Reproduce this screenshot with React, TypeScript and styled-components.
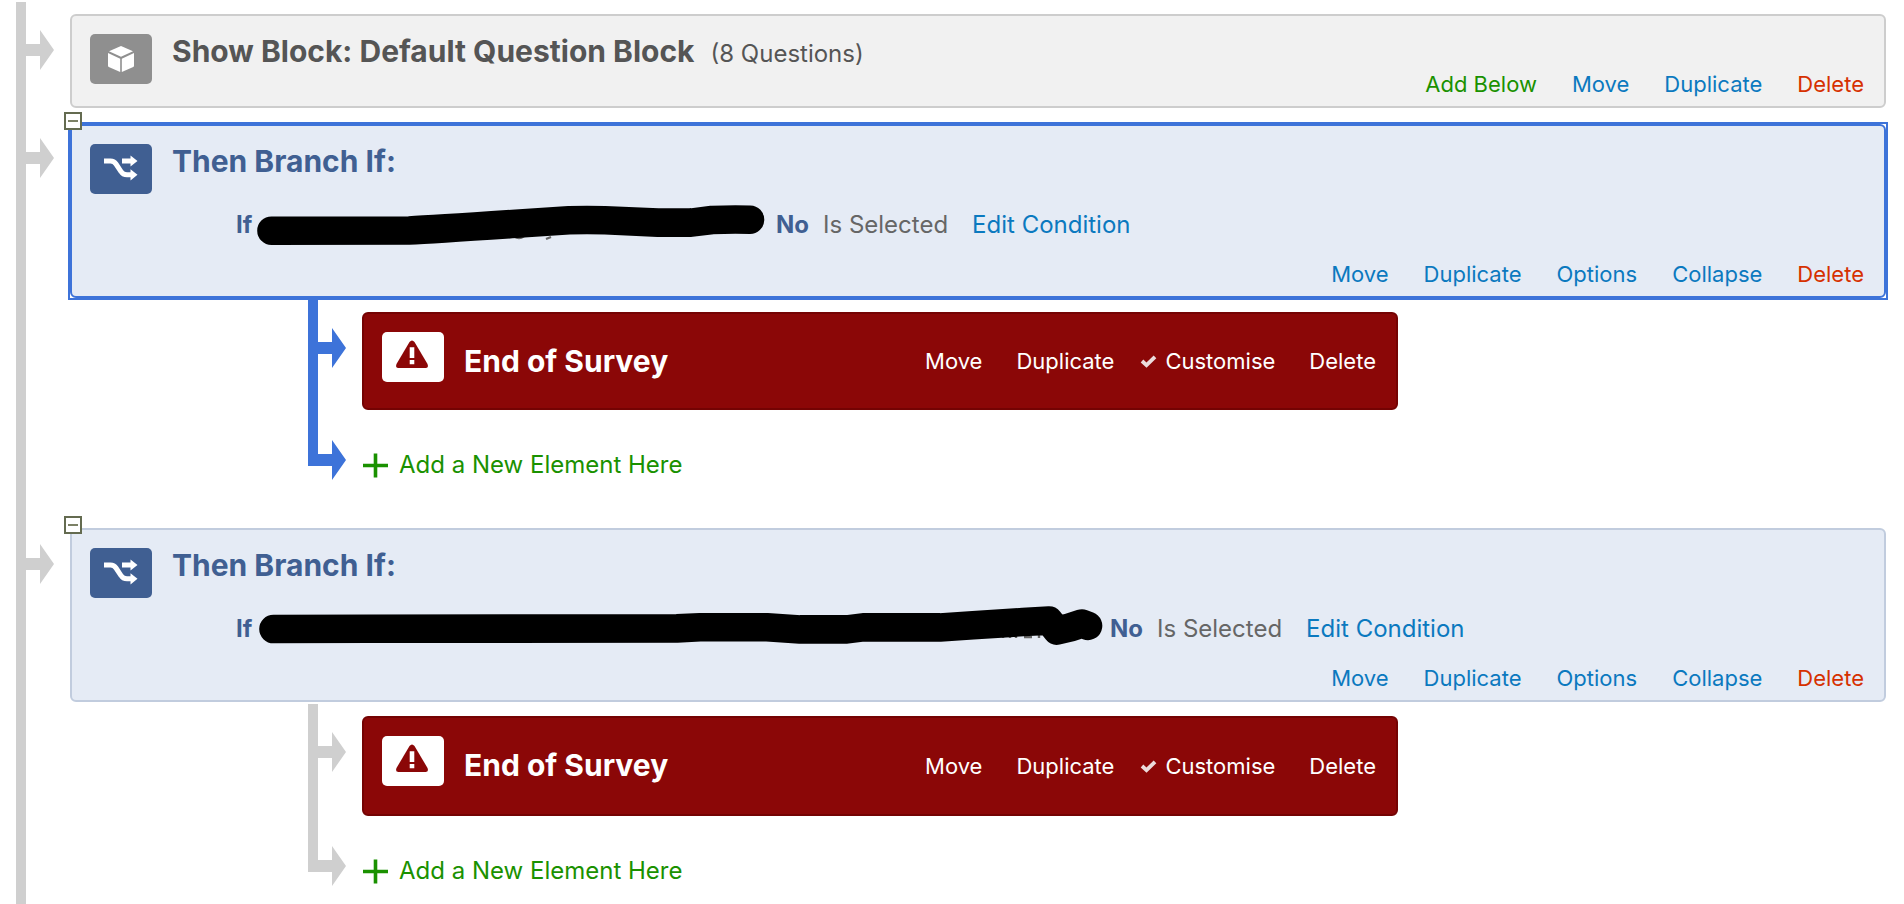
import React from "react";
import styled, { createGlobalStyle } from "styled-components";

const color = {
  link: "#0b79bf",
  danger: "#d63000",
  add: "#1a9100",
  branch: "#405f92",
  selected: "#3d73d9",
  line: "#cfcfcf",
  end: "#8b0707",
};

const GlobalStyle = createGlobalStyle`
  *, *::before, *::after { box-sizing: border-box; }
  body {
    margin: 0;
    background: #fff;
    font-family: Inter, "Liberation Sans", sans-serif;
    font-size: 24px;
    line-height: 34px;
  }
`;

const Flow = styled.main`
  display: flex;
  flex-direction: column;
  min-height: 100vh;
  padding: 2px 18px 0 16px;
`;

const Node = styled.section<{ $grow?: boolean }>`
  display: flex;
  flex: ${(p) => (p.$grow ? "1 0 auto" : "0 0 auto")};
`;

const Gutter = styled.div<{ $active?: boolean }>`
  display: flex;
  flex: 0 0 54px;
  color: ${(p) => (p.$active ? color.selected : color.line)};
`;

const Trunk = styled.div<{ $last?: boolean }>`
  width: 10px;
  background: currentColor;
  ${(p) => p.$last && "height: 54px;"}
`;

const ArrowSvg = styled.svg`
  display: block;
  margin-top: 28px;
`;

const Content = styled.div<{ $top?: number; $bottom?: number }>`
  flex: 1;
  min-width: 0;
  padding: ${(p) => p.$top ?? 12}px 0 ${(p) => p.$bottom ?? 2}px;
`;

const Frame = styled.div<{ $selected?: boolean }>`
  position: relative;
  ${(p) => p.$selected && `outline: 2px solid ${color.selected};`}
`;

const Card = styled.div<{ $kind: "block" | "branch"; $selected?: boolean }>`
  display: flex;
  gap: 20px;
  padding: 18px 20px 10px 18px;
  border: 2px solid
    ${(p) => (p.$selected ? color.selected : p.$kind === "block" ? "#cdcdcd" : "#c1ccde")};
  border-radius: 6px;
  background: ${(p) => (p.$kind === "block" ? "#f1f1f1" : "#e5ebf5")};
  color: ${(p) => (p.$kind === "block" ? "#555" : color.branch)};
`;

const EndCard = styled.div<{ $tall?: boolean }>`
  display: flex;
  gap: 20px;
  max-width: 1036px;
  min-height: ${(p) => (p.$tall ? 100 : 98)}px;
  padding: 18px 20px 18px 18px;
  border: 2px solid #740303;
  border-radius: 6px;
  background: ${color.end};
  color: #fff;
`;

const EndTitle = styled.h3`
  flex: 1;
  margin: 12px 0 0;
  font-size: 30px;
  line-height: 34px;
`;

const IconBox = styled.div<{ $bg: string }>`
  flex: 0 0 62px;
  height: 50px;
  border-radius: 5px;
  background: ${(p) => p.$bg};
  svg { display: block; }
`;

const Body = styled.div`
  flex: 1;
  min-width: 0;
`;

const Heading = styled.header`
  display: flex;
  align-items: baseline;
  gap: 16px;
  height: 34px;
`;

const Title = styled.h2`
  margin: 0;
  font-size: 30px;
  line-height: 34px;
`;

const Actions = styled.nav`
  display: flex;
  justify-content: flex-end;
  gap: 35px;
  margin-top: 4px;
`;

const EndActions = styled.nav`
  display: flex;
  align-items: center;
  gap: 34px;
`;

const TextButton = styled.button<{ $color?: string }>`
  display: flex;
  align-items: center;
  gap: 8px;
  padding: 0;
  border: 0;
  background: none;
  color: ${(p) => p.$color ?? color.link};
  font: inherit;
  font-size: 22px;
  line-height: 24px;
  white-space: nowrap;
  cursor: pointer;
`;

const CheckedButton = styled(TextButton)`
  margin-left: -8px;
`;

const LargeButton = styled(TextButton)`
  font-size: 24px;
  line-height: 34px;
`;

const AddButton = styled(LargeButton)`
  gap: 11px;
`;

const Condition = styled.div`
  display: flex;
  height: 34px;
  margin: 30px 0 20px 64px;
  white-space: nowrap;
`;

const Keyword = styled.strong`
  flex: 0 0 20px;
`;

const Answer = styled.strong`
  margin: 0 14px 0 8px;
`;

const Operator = styled.span`
  margin-right: 24px;
  color: #666;
`;

const Scribble = styled.svg`
  flex: none;
  overflow: visible;
`;

const Toggle = styled.button`
  position: absolute;
  top: -12px;
  left: -6px;
  display: grid;
  place-items: center;
  width: 18px;
  height: 18px;
  padding: 0;
  border: 2px solid #646b50;
  background: #fff;
  cursor: pointer;
  &::before {
    content: "";
    width: 10px;
    height: 2px;
    background: #7c8166;
  }
`;

const Children = styled.div`
  margin: 2px 0 0 238px;
`;

function Branchline({ active, last }: { active?: boolean; last?: boolean }) {
  return (
    <Gutter $active={active}>
      <Trunk $last={last} />
      <ArrowSvg width="28" height="40" viewBox="0 0 28 40" aria-hidden="true">
        <path d="M0 14H14V0L28 20L14 40V26H0Z" fill="currentColor" />
      </ArrowSvg>
    </Gutter>
  );
}

function BlockIcon() {
  return (
    <IconBox $bg="#8f8f8f">
      <svg width="62" height="50" viewBox="0 0 62 50" fill="#fff" aria-hidden="true">
        <path d="M31 12L43 17.2L31 22.8L19 17.2Z" />
        <path d="M18 19L30.2 24.7V38L18.8 33Q18 32.6 18 31.8Z" />
        <path d="M44 19L31.8 24.7V38L43.2 33Q44 32.6 44 31.8Z" />
      </svg>
    </IconBox>
  );
}

function BranchIcon() {
  return (
    <IconBox $bg={color.branch}>
      <svg width="62" height="50" viewBox="0 0 62 50" aria-hidden="true">
        <path d="M14 17H20.5Q24 17 26 20L31 27.5Q33 30.8 37 30.8H41M32 17H41" fill="none" stroke="#fff" strokeWidth="5" />
        <path d="M40.5 11.5L47.5 17L40.5 22.5ZM40.5 25.2L47.5 30.8L40.5 36.4Z" fill="#fff" />
      </svg>
    </IconBox>
  );
}

function WarningIcon() {
  return (
    <IconBox $bg="#fff">
      <svg width="62" height="50" viewBox="0 0 62 50" aria-hidden="true">
        <path d="M27.5 10Q30 7 32.5 10L45.5 32Q47 36 43.5 36H16.5Q13 36 14.5 32Z" fill={color.end} />
        <path d="M27.7 15.3H32.3V26H27.7ZM27.7 28H32.3V32.2H27.7Z" fill="#fff" />
      </svg>
    </IconBox>
  );
}

const SHORT_STROKE =
  "M15.5 22.7L153 22.5Q176 21.5 260 15.8L313 12.3Q331 11.7 349 12.3L402 14.6H435L456 12Q475 11.2 494 11.7";
const LONG_STROKE =
  "M17.5 17L114 16.8L421 16.4L444 15.2H511L544 17.4H591L607 15.4H684L717 13.3L767 10L793 8.6L801 18.6Q814 16 826 11.5L832 13.8";

function EndOfSurvey({ tall }: { tall?: boolean }) {
  return (
    <EndCard $tall={tall}>
      <WarningIcon />
      <EndTitle>End of Survey</EndTitle>
      <EndActions>
        <TextButton $color="#fff">Move</TextButton>
        <TextButton $color="#fff">Duplicate</TextButton>
        <CheckedButton $color="#fff">
          <svg width="17" height="14" viewBox="0 0 17 14" aria-hidden="true">
            <path d="M2 7L6.5 11.2L15 2.8" fill="none" stroke="#ecdcdc" strokeWidth="3.8" />
          </svg>
          Customise
        </CheckedButton>
        <TextButton $color="#fff">Delete</TextButton>
      </EndActions>
    </EndCard>
  );
}

interface BranchProps {
  selected?: boolean;
  last?: boolean;
  strokeWidth: number;
  children: React.ReactNode;
}

function Branch({ selected, last, strokeWidth, children }: BranchProps) {
  return (
    <Node $grow={last}>
      <Branchline />
      <Content $top={selected ? 14 : 12} $bottom={0}>
        <Frame $selected={selected}>
          <Card $kind="branch" $selected={selected}>
            <BranchIcon />
            <Body>
              <Heading>
                <Title>Then Branch If:</Title>
              </Heading>
              <Condition>
                <Keyword>If</Keyword>
                <Scribble width={strokeWidth} height="34" aria-hidden="true">
                  {children}
                </Scribble>
                <Answer>No</Answer>
                <Operator>Is Selected</Operator>
                <LargeButton>Edit Condition</LargeButton>
              </Condition>
              <Actions>
                <TextButton>Move</TextButton>
                <TextButton>Duplicate</TextButton>
                <TextButton>Options</TextButton>
                <TextButton>Collapse</TextButton>
                <TextButton $color={color.danger}>Delete</TextButton>
              </Actions>
            </Body>
          </Card>
          <Toggle aria-label="Collapse branch" />
        </Frame>
        <Children>
          <Node>
            <Branchline active={selected} />
            <Content>
              <EndOfSurvey tall={!selected} />
            </Content>
          </Node>
          <Node>
            <Branchline active={selected} last />
            <Content $top={36} $bottom={34}>
              <AddButton $color={color.add}>
                <svg width="26" height="28" viewBox="0 0 26 28" aria-hidden="true">
                  <path d="M1 14.5H26M13.5 2.5V26.5" stroke="currentColor" strokeWidth="3.6" />
                </svg>
                Add a New Element Here
              </AddButton>
            </Content>
          </Node>
        </Children>
      </Content>
    </Node>
  );
}

export default function App() {
  return (
    <>
      <GlobalStyle />
      <Flow>
        <Node>
          <Branchline />
          <Content>
            <Card $kind="block">
              <BlockIcon />
              <Body>
                <Heading>
                  <Title>Show Block: Default Question Block</Title>
                  <span>(8 Questions)</span>
                </Heading>
                <Actions>
                  <TextButton $color={color.add}>Add Below</TextButton>
                  <TextButton>Move</TextButton>
                  <TextButton>Duplicate</TextButton>
                  <TextButton $color={color.danger}>Delete</TextButton>
                </Actions>
              </Body>
            </Card>
          </Content>
        </Node>
        <Branch selected strokeWidth={512}>
          <path d="M258 28Q263 32 268 28M290 31L295 29" fill="none" stroke="#666" strokeWidth="2.4" />
          <path d={SHORT_STROKE} fill="none" stroke="#000" strokeWidth="28.6" strokeLinecap="round" strokeLinejoin="round" />
        </Branch>
        <Branch last strokeWidth={846}>
          <path d="M747 22V26M754 22V26M760 22V26M768 25H776M783 22V26" fill="none" stroke="#666" strokeWidth="2.4" />
          <path d={LONG_STROKE} fill="none" stroke="#000" strokeWidth="28.6" strokeLinecap="round" strokeLinejoin="round" />
        </Branch>
      </Flow>
    </>
  );
}
